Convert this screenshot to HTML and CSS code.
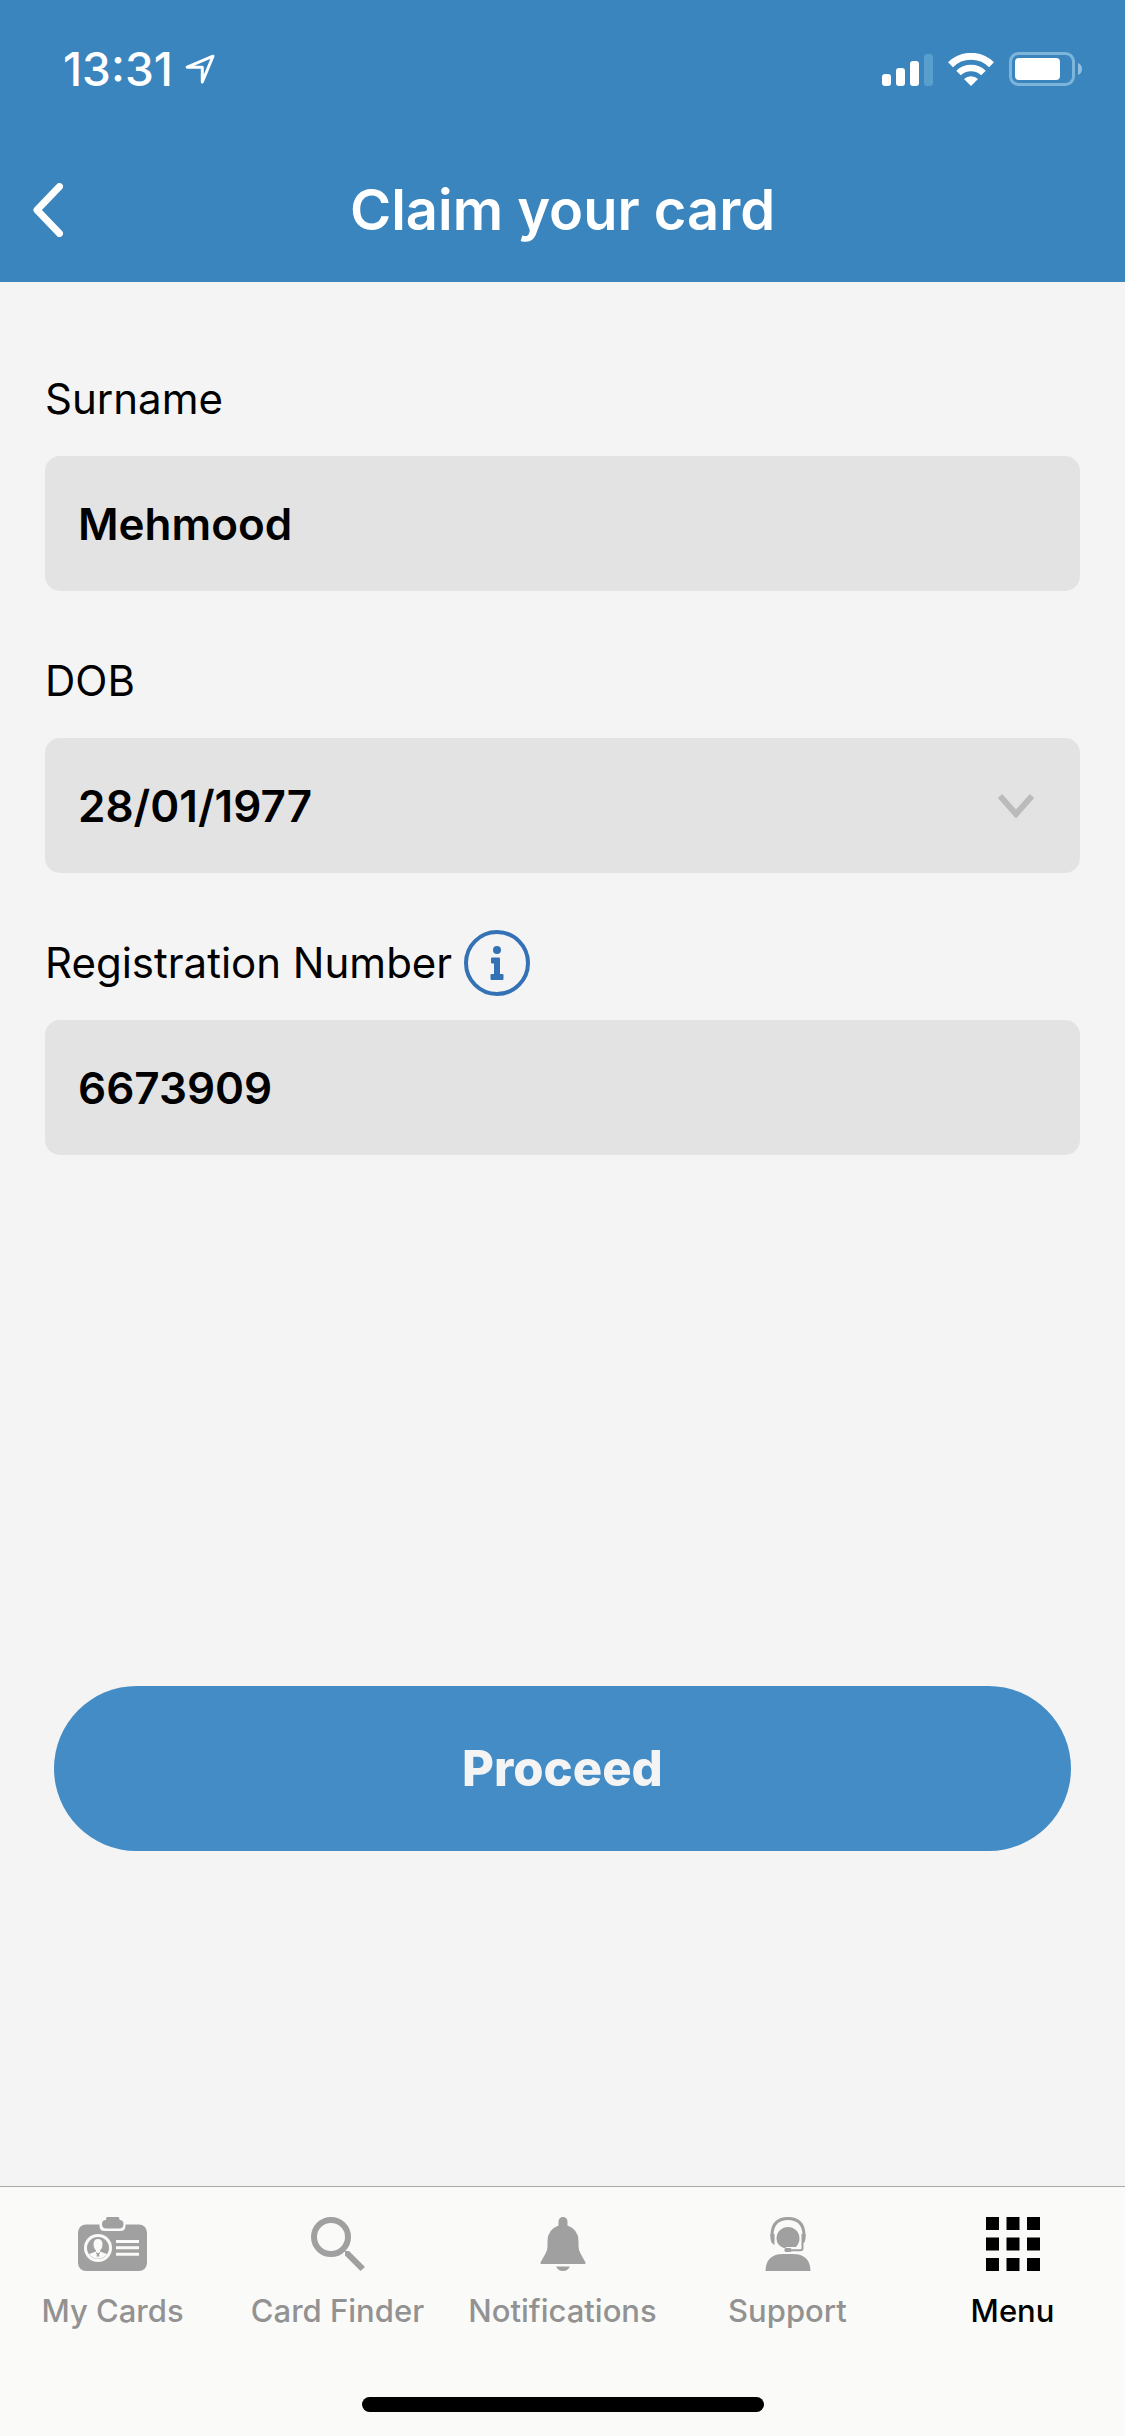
FILE: index.html
```html
<!DOCTYPE html>
<html lang="en">
<head>
  <meta charset="utf-8">
  <meta name="viewport" content="width=device-width, initial-scale=1">
  <title>Claim your card</title>
  <link rel="stylesheet" href="styles.css">
</head>
<body>
  <div class="app">
    <header class="header">
      <div class="status">
        <div class="status-left">
          <span class="time">13:31</span>
          <svg class="icon-location" viewBox="0 0 30 30" aria-hidden="true"><path d="M28 2.200 2.200 13.200H17.300V28Z" fill="none" stroke="#fff" stroke-width="3" stroke-linejoin="round"/></svg>
        </div>
        <div class="status-right">
          <svg class="icon-signal" viewBox="0 0 51 33" aria-hidden="true">
            <g fill="#fff"><rect y="21" width="9" height="12" rx="3"/><rect x="14" y="15" width="9" height="18" rx="3"/><rect x="28" y="8" width="9" height="25" rx="3"/></g>
            <rect x="42" y="1" width="9" height="32" rx="3" fill="#589fce"/>
          </svg>
          <svg class="icon-wifi" viewBox="0 0 46 33" aria-hidden="true">
            <g fill="none" stroke="#fff"><path d="M2.500 11.800a29 29 0 0 1 41 0" stroke-width="7"/><path d="M10.500 20a18 18 0 0 1 25 0" stroke-width="6.500"/></g>
            <path d="M23 33 16 26a10 10 0 0 1 14 0Z" fill="#fff"/>
          </svg>
          <svg class="icon-battery" viewBox="0 0 74 34" aria-hidden="true">
            <rect x="1.500" y="1.500" width="63" height="31" rx="8" fill="none" stroke="#7cb4da" stroke-width="3"/>
            <rect x="6" y="6" width="45" height="22" rx="4" fill="#fff"/>
            <path d="M69 11q4 1.500 4 6t-4 6Z" fill="#8fbfe0"/>
          </svg>
        </div>
      </div>
      <div class="navbar">
        <button class="back" type="button" aria-label="Back">
          <svg class="icon-back" viewBox="0 0 30 54" aria-hidden="true"><path d="M26.500 3.500 4 27 26.500 50.500" fill="none" stroke="#fff" stroke-width="7" stroke-linecap="round" stroke-linejoin="round"/></svg>
        </button>
        <h1 class="title">Claim your card</h1>
      </div>
    </header>

    <main class="main">
      <form class="form">
        <div class="field">
          <div class="label-row"><label for="surname">Surname</label></div>
          <input class="control" id="surname" type="text" value="Mehmood">
        </div>
        <div class="field">
          <div class="label-row"><label for="dob">DOB</label></div>
          <div class="select-wrap">
            <select class="control" id="dob"><option>28/01/1977</option></select>
            <svg class="icon-chevron" viewBox="0 0 36 24" aria-hidden="true"><path d="M2 2 18 20 34 2" fill="none" stroke="#bbb" stroke-width="6"/></svg>
          </div>
        </div>
        <div class="field">
          <div class="label-row">
            <label for="regno">Registration Number</label>
            <button class="info" type="button" aria-label="About the registration number">
              <svg class="icon-info" viewBox="0 0 66 66" aria-hidden="true">
                <circle cx="33" cy="33" r="31" fill="none" stroke="#3472b5" stroke-width="4"/>
                <g fill="#3472b5"><circle cx="33" cy="20" r="4"/><path d="M28 27.500h7q1 0 1 1V44h2.500q1 0 1 1v4q0 1-1 1h-11q-1 0-1-1v-4q0-1 1-1H30V33.500h-2q-1 0-1-1v-4q0-1 1-1Z"/></g>
              </svg>
            </button>
          </div>
          <input class="control" id="regno" type="text" inputmode="numeric" value="6673909">
        </div>
        <button class="proceed" type="submit">Proceed</button>
      </form>
    </main>

    <nav class="tabbar">
      <div class="tabs">
        <a class="tab" href="#cards">
          <svg class="icon-tab icon-wide" viewBox="0 0 69 54" aria-hidden="true">
            <rect y="7.500" width="69" height="46.500" rx="8" fill="#a0a0a0"/>
            <path d="M21.500 7v2q0 5 5 5h16q5 0 5-5V7Z" fill="#fafaf8"/>
            <path d="M29 0h11q1.500 0 1.500 3 4 0 4 4 0 4.500-4.500 4.500H28.500q-4.500 0-4.500-4.500 0-4 4-4 0-3 1-3Z" fill="#a0a0a0"/>
            <circle cx="20" cy="31" r="14" fill="#fafaf8"/>
            <circle cx="20" cy="31" r="11" fill="#a0a0a0"/>
            <path d="M20 22q4.500 0 4.500 5.500 0 4-2.500 6v1l7 2.500a11 11 0 0 1-18 0l7-2.500v-1q-2.500-2-2.500-6Q15.500 22 20 22Z" fill="#fafaf8"/>
            <path d="m18.500 35 1.500 1.500 1.500-1.500.5 1.500-1 1 .5 2h-3l.5-2-1-1Z" fill="#a0a0a0"/>
            <path d="M38 24.500h23M38 30.800h23M38 37.200h23" stroke="#fafaf8" stroke-width="3"/>
          </svg>
          <span>My Cards</span>
        </a>
        <a class="tab" href="#finder">
          <svg class="icon-tab" viewBox="0 0 54 54" aria-hidden="true"><circle cx="20" cy="20" r="17" fill="none" stroke="#a0a0a0" stroke-width="6"/><path d="M34 34h4l16 16-4.500 4L34 38.500Z" fill="#a0a0a0"/></svg>
          <span>Card Finder</span>
        </a>
        <a class="tab" href="#notifications">
          <svg class="icon-tab" viewBox="0 0 54 54" aria-hidden="true"><path d="M22.500 8.500V4.500a4.500 4.500 0 0 1 9 0v4q11 4 11 15.500v5q0 4.500 2 7.500l5 9q.5 1.500-1 1.500h-43q-1.500 0-1-1.500l5-9q2-3 2-7.500v-5q0-11.500 11-15.500ZM20 49.500h14q-2.500 4.500-7 4.500t-7-4.500Z" fill="#a0a0a0"/></svg>
          <span>Notifications</span>
        </a>
        <a class="tab" href="#support">
          <svg class="icon-tab" viewBox="0 0 54 54" aria-hidden="true">
            <g fill="#a0a0a0"><path d="M4.500 54Q5 37 22 37h10q17 0 17.500 17Z"/><path d="M24 31.500q-8.500-3-8.500-10a11.500 11.500 0 0 1 23 0q0 4.500-3.500 8.500h-9q-2 0-2 1.500Z"/><path d="M13.500 17v11Q9.500 26 9.500 21v-4ZM40.500 17v11q4-2 4-7v-4Z"/><rect x="23.500" y="31" width="7" height="4" rx="1.500"/></g>
            <path d="M11 20v-3Q12 1.500 27 1.500T43 17v3" fill="none" stroke="#a0a0a0" stroke-width="3"/>
            <path d="M30 33.200h9.500q2 0 2-2V27" fill="none" stroke="#a0a0a0" stroke-width="2"/>
          </svg>
          <span>Support</span>
        </a>
        <a class="tab tab-active" href="#menu" aria-current="page">
          <svg class="icon-tab" viewBox="0 0 54 54" aria-hidden="true"><path d="M0 0h13v13H0ZM20.500 0h13v13h-13ZM41 0h13v13H41ZM0 20.500h13v13H0ZM20.500 20.500h13v13h-13ZM41 20.500h13v13H41ZM0 41h13v13H0ZM20.500 41h13v13h-13ZM41 41h13v13H41Z" fill="#000"/></svg>
          <span>Menu</span>
        </a>
      </div>
      <div class="home-indicator"></div>
    </nav>
  </div>
</body>
</html>
```
FILE: styles.css
```css
*,
*::before,
*::after {
  box-sizing: border-box;
}

body {
  margin: 0;
  background: #f4f4f4;
  color: #000;
  font-family: Inter, "Liberation Sans", sans-serif;
}

button,
input,
select {
  border: 0;
  font-family: inherit;
}

svg {
  display: block;
  flex: none;
}

.app {
  display: flex;
  flex-direction: column;
  min-height: 100vh;
}

/* Header */

.header {
  background: #3a85be;
  color: #fff;
}

.status {
  display: flex;
  align-items: center;
  justify-content: space-between;
  height: 138px;
  padding: 0 42px 0 63px;
}

.status-left {
  display: flex;
  align-items: center;
  gap: 12px;
}

.time {
  font-size: 46px;
  font-weight: 500;
  line-height: 56px;
}

.status-right {
  display: flex;
  align-items: center;
  gap: 15px;
}

.icon-location {
  width: 30px;
  height: 30px;
}

.icon-signal {
  width: 51px;
  height: 33px;
}

.icon-wifi {
  width: 46px;
  height: 33px;
}

.icon-battery {
  width: 74px;
  height: 34px;
}

.navbar {
  display: grid;
  grid-template-columns: 96px 1fr 96px;
  align-items: center;
  height: 144px;
}

.back {
  display: flex;
  align-items: center;
  height: 96px;
  padding: 0 33px;
  background: none;
}

.icon-back {
  width: 30px;
  height: 54px;
}

.title {
  margin: 0;
  font-size: 56px;
  font-weight: 600;
  line-height: 72px;
  text-align: center;
}

/* Form */

.main {
  flex: 1;
  padding: 81px 45px;
}

.form {
  display: flex;
  flex-direction: column;
  gap: 54px;
}

.field {
  display: flex;
  flex-direction: column;
  gap: 21px;
}

.label-row {
  display: flex;
  align-items: center;
  gap: 12px;
  height: 72px;
  font-size: 42px;
  line-height: 56px;
}

.info {
  padding: 0;
  background: none;
}

.icon-info {
  width: 66px;
  height: 66px;
}

.control {
  width: 100%;
  height: 135px;
  padding: 0 33px;
  border-radius: 15px;
  background: #e3e3e3;
  color: #000;
  font-size: 44px;
  font-weight: 600;
  appearance: none;
}

.select-wrap {
  position: relative;
}

.icon-chevron {
  position: absolute;
  top: 56px;
  right: 46px;
  width: 36px;
  height: 24px;
  pointer-events: none;
}

.proceed {
  height: 165px;
  margin: 477px 9px 0;
  border-radius: 83px;
  background: #448cc5;
  color: #f4f4f4;
  font-size: 49px;
  font-weight: 800;
}

/* Tab bar */

.tabbar {
  display: flex;
  flex-direction: column;
  align-items: center;
  gap: 68px;
  padding: 30px 0 24px;
  border-top: 1px solid #a9a9a9;
  background: #fafaf8;
}

.tabs {
  display: grid;
  grid-template-columns: repeat(5, 1fr);
  width: 100%;
}

.tab {
  display: flex;
  flex-direction: column;
  align-items: center;
  gap: 22px;
  color: #929292;
  font-size: 31px;
  font-weight: 500;
  line-height: 36px;
  text-decoration: none;
  white-space: nowrap;
}

.tab-active {
  color: #000;
}

.icon-tab {
  width: 54px;
  height: 54px;
}

.icon-wide {
  width: 69px;
}

.home-indicator {
  width: 402px;
  height: 15px;
  border-radius: 8px;
  background: #000;
}
```
